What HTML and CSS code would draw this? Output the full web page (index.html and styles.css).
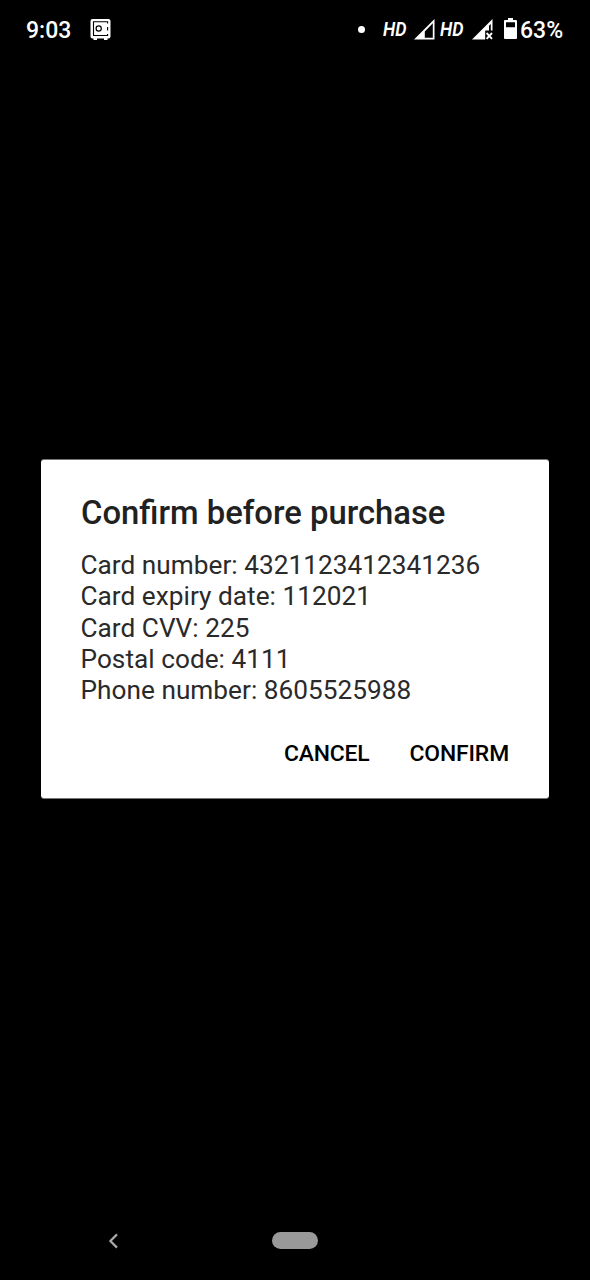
FILE: index.html
```html
<!DOCTYPE html>
<html lang="en">
<head>
<meta charset="utf-8">
<title>Confirm before purchase</title>
<link rel="stylesheet" href="styles.css">
</head>
<body>
<div class="screen">
  <header class="status">
    <span class="time">9:03</span>
    <svg class="safe" width="22" height="22" viewBox="0 0 22 22">
      <path fill="#fff" d="M2.500 0h16q2 0 2 2V17.500q0 2-2 2H17.500V21H14v-1.500H7V21H3.500v-1.500h-1q-2 0-2-2V2q0-2 2-2z"/>
      <path fill="none" stroke="#000" stroke-width="1.100" d="M17.600 4.500V2.800H3.500v13.700h14.100V15M17.600 8v3.500"/>
      <circle cx="8.700" cy="9.500" r="2.600" fill="none" stroke="#000" stroke-width="1.200"/>
    </svg>
    <span class="dot"></span>
    <span class="hd hd-first">HD</span>
    <svg class="signal" width="22" height="22" viewBox="0 0 22 22">
      <path fill="#fff" fill-rule="evenodd" d="M0 20.500 20.500 0V20.500zM10.800 12.500V18.800H18.800V4.300z"/>
    </svg>
    <span class="hd hd-second">HD</span>
    <svg class="signal-off" width="22" height="22" viewBox="0 0 22 22">
      <path fill="#fff" d="M0 20.500 20.500 0v11.500h-1.700V4.900L17 6.800v4.700h-3.800v9z"/>
      <path fill="none" stroke="#fff" stroke-width="1.900" d="m14.600 14 5.400 5.800m0-5.800-5.400 5.800"/>
    </svg>
    <svg class="battery" width="13" height="22" viewBox="0 0 13 22">
      <path fill="#fff" fill-rule="evenodd" d="M4 0h5v2h3Q13 2 13 3v17q0 1-1 1h-11Q0 21 0 20v-17Q0 2 1 2H4zM2 4.300v4.900h9V4.300z"/>
    </svg>
    <span class="percent">63%</span>
  </header>
  <main class="backdrop">
    <section class="dialog" role="dialog">
      <h1 class="title">Confirm before purchase</h1>
      <div class="details">
        <div>Card number: 4321123412341236</div>
        <div>Card expiry date: 112021</div>
        <div>Card CVV: 225</div>
        <div>Postal code: 4111</div>
        <div>Phone number: 8605525988</div>
      </div>
      <div class="actions">
        <button class="action">CANCEL</button>
        <button class="action">CONFIRM</button>
      </div>
    </section>
  </main>
  <nav class="navbar">
    <svg class="back" width="12" height="16" viewBox="0 0 12 16">
      <path fill="none" stroke="#aaa" stroke-width="2.200" d="M9 1.400 2.400 8 9 14.600"/>
    </svg>
    <span class="pill"></span>
  </nav>
</div>
</body>
</html>
```
FILE: styles.css
```css
* { box-sizing: border-box; }
body { margin: 0; background: #000; font-family: Roboto, "Liberation Sans", sans-serif; }
.screen { width: 590px; height: 1280px; display: flex; flex-direction: column; background: #000; overflow: hidden; }
.status { height: 60px; padding: 0 27px 0 26px; display: flex; align-items: center; color: #fff; }
.time, .percent { font-size: 23px; font-weight: 500; line-height: 26px; margin-top: 2px; white-space: nowrap; }
.time { width: 45px; }
.safe { margin: -1px 0 0 19px; }
.dot { width: 7px; height: 7px; margin: -2px 0 0 auto; border-radius: 50%; background: #fff; }
.hd { width: 24px; font-size: 20.5px; font-weight: 600; font-style: italic; line-height: 24px; transform: scaleX(0.87); transform-origin: left; margin-top: -3px; }
.hd-first { margin-left: 18px; }
.signal { margin-left: 7px; }
.hd-second { margin-left: 4px; }
.signal-off { margin-left: 8px; }
.battery { width: 13px; margin: -2px 0 0 10px; }
.percent { width: 43px; margin-left: 3px; }
.backdrop { flex: 1; padding: 400px 41px 0; }
.dialog { height: 338px; padding: 33px 40px 0; border-radius: 3px; background: #fff; box-shadow: 0 -1px 0 #777, 0 1px 0 #777; }
.title { margin: 0; font-size: 32.8px; font-weight: 500; line-height: 40px; color: #212121; white-space: nowrap; }
.details { margin: 17px 0 0 -0.5px; font-size: 26.2px; line-height: 31.25px; letter-spacing: 0.03px; color: #2a2a2a; white-space: nowrap; }
.actions { display: flex; justify-content: flex-end; gap: 40px; margin-top: 33.5px; }
.action { padding: 0; border: 0; background: none; font: 500 22.9px/28px Roboto, "Liberation Sans", sans-serif; letter-spacing: -0.15px; color: #000; }
.navbar { height: 80px; display: flex; align-items: center; padding: 1px 0 0 108px; }
.back { display: block; }
.pill { width: 46px; height: 17px; margin-left: 152px; border-radius: 9px; background: #999; }
```
